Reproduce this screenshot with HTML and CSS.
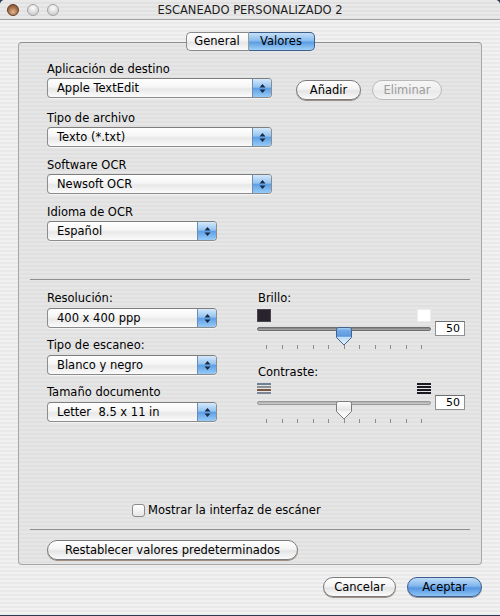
FILE: index.html
```html
<!DOCTYPE html>
<html lang="es">
<head>
<meta charset="utf-8">
<title>Escaneado personalizado 2</title>
<link rel="stylesheet" href="styles.css">
</head>
<body>
<div class="window">
  <header class="titlebar">
    <div class="lights">
      <span class="light light-close"></span>
      <span class="light"></span>
      <span class="light"></span>
    </div>
    <h1 class="title">ESCANEADO PERSONALIZADO 2</h1>
    <div></div>
  </header>

  <main class="content">
    <nav class="tabs">
      <span class="tab">General</span>
      <span class="tab tab-active">Valores</span>
    </nav>

    <section class="panel">
      <div class="group-top">
        <div class="field">
          <div class="label">Aplicación de destino</div>
          <div class="control-row">
            <div class="popup popup-long">
              <span class="popup-text">Apple TextEdit</span>
              <span class="popup-arrows"><svg width="7" height="11" viewBox="0 0 7 11"><path d="M3.5 1 L6.5 4.5 L0.5 4.5 Z M0.5 6.5 L6.5 6.5 L3.5 10 Z"/></svg></span>
            </div>
            <button class="btn btn-add">Añadir</button>
            <button class="btn btn-remove btn-disabled">Eliminar</button>
          </div>
        </div>

        <div class="field">
          <div class="label">Tipo de archivo</div>
          <div class="control-row">
            <div class="popup popup-long">
              <span class="popup-text">Texto (*.txt)</span>
              <span class="popup-arrows"><svg width="7" height="11" viewBox="0 0 7 11"><path d="M3.5 1 L6.5 4.5 L0.5 4.5 Z M0.5 6.5 L6.5 6.5 L3.5 10 Z"/></svg></span>
            </div>
          </div>
        </div>

        <div class="field">
          <div class="label">Software OCR</div>
          <div class="control-row">
            <div class="popup popup-long">
              <span class="popup-text">Newsoft OCR</span>
              <span class="popup-arrows"><svg width="7" height="11" viewBox="0 0 7 11"><path d="M3.5 1 L6.5 4.5 L0.5 4.5 Z M0.5 6.5 L6.5 6.5 L3.5 10 Z"/></svg></span>
            </div>
          </div>
        </div>

        <div class="field">
          <div class="label">Idioma de OCR</div>
          <div class="control-row">
            <div class="popup popup-short">
              <span class="popup-text">Español</span>
              <span class="popup-arrows"><svg width="7" height="11" viewBox="0 0 7 11"><path d="M3.5 1 L6.5 4.5 L0.5 4.5 Z M0.5 6.5 L6.5 6.5 L3.5 10 Z"/></svg></span>
            </div>
          </div>
        </div>
      </div>

      <div class="sep sep-top"></div>

      <div class="group-bottom">
        <div class="col-left">
          <div class="field field-low">
            <div class="label">Resolución:</div>
            <div class="control-row">
              <div class="popup popup-short">
                <span class="popup-text">400 x 400 ppp</span>
                <span class="popup-arrows"><svg width="7" height="11" viewBox="0 0 7 11"><path d="M3.5 1 L6.5 4.5 L0.5 4.5 Z M0.5 6.5 L6.5 6.5 L3.5 10 Z"/></svg></span>
              </div>
            </div>
          </div>
          <div class="field field-low">
            <div class="label">Tipo de escaneo:</div>
            <div class="control-row">
              <div class="popup popup-short">
                <span class="popup-text">Blanco y negro</span>
                <span class="popup-arrows"><svg width="7" height="11" viewBox="0 0 7 11"><path d="M3.5 1 L6.5 4.5 L0.5 4.5 Z M0.5 6.5 L6.5 6.5 L3.5 10 Z"/></svg></span>
              </div>
            </div>
          </div>
          <div class="field field-low">
            <div class="label">Tamaño documento</div>
            <div class="control-row">
              <div class="popup popup-short">
                <span class="popup-text">Letter&nbsp; 8.5 x 11 in</span>
                <span class="popup-arrows"><svg width="7" height="11" viewBox="0 0 7 11"><path d="M3.5 1 L6.5 4.5 L0.5 4.5 Z M0.5 6.5 L6.5 6.5 L3.5 10 Z"/></svg></span>
              </div>
            </div>
          </div>
        </div>

        <div class="col-right">
          <div class="slider-field">
            <div class="label">Brillo:</div>
            <div class="slider-body">
              <div class="slider-main">
                <div class="slider-icons">
                  <span class="swatch swatch-dark"></span>
                  <span class="swatch swatch-light"></span>
                </div>
                <div class="rail">
                  <div class="track track-active"></div>
                  <svg class="thumb" style="left: 50%" width="16" height="19" viewBox="0 0 16 19">
                    <defs>
                      <linearGradient id="thumbBlue" x1="0" y1="0" x2="0" y2="1">
                        <stop offset="0" stop-color="#b3d6f6"/>
                        <stop offset="0.18" stop-color="#6ea8e6"/>
                        <stop offset="0.5" stop-color="#5a98df"/>
                        <stop offset="0.56" stop-color="#bcdcf8"/>
                        <stop offset="1" stop-color="#e6f4fd"/>
                      </linearGradient>
                    </defs>
                    <path d="M2.5 0.5 H13.5 A2 2 0 0 1 15.5 2.5 V10.5 L8 18 L0.5 10.5 V2.5 A2 2 0 0 1 2.5 0.5 Z" fill="url(#thumbBlue)" stroke="#42628c"/>
                  </svg>
                </div>
                <div class="ticks">
                  <i></i><i></i><i></i><i></i><i></i><i></i><i></i><i></i><i></i><i></i><i></i>
                </div>
              </div>
              <div class="value">50</div>
            </div>
          </div>

          <div class="slider-field slider-field-next">
            <div class="label">Contraste:</div>
            <div class="slider-body">
              <div class="slider-main">
                <div class="slider-icons">
                  <svg class="bars" width="14" height="12" viewBox="0 0 14 12">
                    <rect x="0" y="0" width="14" height="2" fill="#6f8196"/>
                    <rect x="0" y="3" width="14" height="2" fill="#8d8f93"/>
                    <rect x="0" y="6" width="14" height="2" fill="#7a5845"/>
                    <rect x="0" y="9" width="14" height="2" fill="#7c8898"/>
                  </svg>
                  <svg class="bars" width="14" height="12" viewBox="0 0 14 12">
                    <rect x="0" y="0" width="14" height="2" fill="#1c1b22"/>
                    <rect x="0" y="3" width="14" height="2" fill="#1c1b22"/>
                    <rect x="0" y="6" width="14" height="2" fill="#1c1b22"/>
                    <rect x="0" y="9" width="14" height="2" fill="#1c1b22"/>
                  </svg>
                </div>
                <div class="rail">
                  <div class="track"></div>
                  <svg class="thumb" style="left: 50%" width="16" height="19" viewBox="0 0 16 19">
                    <defs>
                      <linearGradient id="thumbGray" x1="0" y1="0" x2="0" y2="1">
                        <stop offset="0" stop-color="#ffffff"/>
                        <stop offset="0.5" stop-color="#e4e4e4"/>
                        <stop offset="0.56" stop-color="#f4f4f4"/>
                        <stop offset="1" stop-color="#ffffff"/>
                      </linearGradient>
                    </defs>
                    <path d="M2.5 0.5 H13.5 A2 2 0 0 1 15.5 2.5 V10.5 L8 18 L0.5 10.5 V2.5 A2 2 0 0 1 2.5 0.5 Z" fill="url(#thumbGray)" stroke="#7a7a7a"/>
                  </svg>
                </div>
                <div class="ticks">
                  <i></i><i></i><i></i><i></i><i></i><i></i><i></i><i></i><i></i><i></i><i></i>
                </div>
              </div>
              <div class="value">50</div>
            </div>
          </div>
        </div>
      </div>

      <label class="check-row">
        <span class="checkbox"></span>
        <span>Mostrar la interfaz de escáner</span>
      </label>

      <div class="sep sep-bottom"></div>

      <div class="reset-row">
        <button class="btn btn-reset">Restablecer valores predeterminados</button>
      </div>
    </section>

    <footer class="footer">
      <button class="btn btn-cancel">Cancelar</button>
      <button class="btn btn-default">Aceptar</button>
    </footer>
  </main>
</div>
</body>
</html>
```

FILE: styles.css
```css
* {
  box-sizing: border-box;
}

html,
body {
  margin: 0;
  padding: 0;
}

body {
  width: 500px;
  height: 616px;
  overflow: hidden;
  background: #2e3a55;
  font-family: "DejaVu Sans", "Liberation Sans", sans-serif;
  font-size: 11.5px;
  color: #000;
}

/* ---------- window frame ---------- */

.window {
  width: 500px;
  height: 615px;
  display: flex;
  flex-direction: column;
  border-radius: 5px 5px 0 0;
  overflow: hidden;
  background: repeating-linear-gradient(to bottom, #f1f1f1 0 2px, #e9e9e9 2px 4px);
}

.titlebar {
  flex: none;
  height: 20px;
  display: grid;
  grid-template-columns: 1fr auto 1fr;
  align-items: center;
  padding: 0 7px;
  background: repeating-linear-gradient(to bottom, #e9e9e9 0 2px, #e1e1e1 2px 4px);
  border-bottom: 1px solid #a3a3a3;
}

.lights {
  display: flex;
  gap: 8px;
}

.light {
  width: 12px;
  height: 12px;
  border-radius: 50%;
  border: 1px solid #a2a2a2;
  background: radial-gradient(circle at 50% 30%, #fdfdfd 0, #dcdcdc 55%, #c3c3c3 100%);
}

.light-close {
  border-color: #5e3b22;
  background: radial-gradient(circle at 50% 70%, #e2b88f 0, #a66f49 55%, #6f4427 100%);
}

.title {
  margin: 0;
  font-size: 11.5px;
  font-weight: normal;
  color: #1c1c1c;
  letter-spacing: 0;
}

/* ---------- content ---------- */

.content {
  flex: 1;
  display: flex;
  flex-direction: column;
  padding: 12px 18px 0;
}

.tabs {
  position: relative;
  z-index: 1;
  align-self: center;
  display: flex;
  height: 19px;
}

.tab {
  display: flex;
  align-items: center;
  justify-content: center;
  height: 19px;
  border: 1px solid #8a8a8a;
  background: linear-gradient(to bottom, #ffffff 0, #f4f4f4 45%, #e6e6e6 55%, #fafafa 100%);
  line-height: 1;
}

.tab:first-child {
  width: 63px;
  border-radius: 5px 0 0 5px;
  border-right-color: #9a9a9a;
}

.tab-active {
  width: 66px;
  border-radius: 0 5px 5px 0;
  border-color: #3f5f8c;
  border-left: none;
  background: linear-gradient(to bottom, #c5e0f8 0, #88bcee 45%, #5c9de3 55%, #9fd0f7 100%);
}

.panel {
  flex: none;
  height: 523px;
  margin-top: -9px;
  display: flex;
  flex-direction: column;
  padding: 19px 11px 0;
  border: 1px solid #a6a6a6;
  border-top-color: #8e8e8e;
  border-radius: 4px;
  background: repeating-linear-gradient(to bottom, #e6e6e6 0 2px, #e0e0e0 2px 4px);
}

.group-top {
  padding-left: 17px;
}

.field + .field {
  margin-top: 11px;
}

.label {
  height: 14px;
  line-height: 14px;
  white-space: nowrap;
}

.control-row {
  display: flex;
  align-items: flex-start;
  margin-top: 2px;
}

/* ---------- popup menus ---------- */

.popup {
  display: flex;
  height: 20px;
  border: 1px solid #8c8c8c;
  border-top-color: #7e7e7e;
  border-radius: 4px;
  background: linear-gradient(to bottom, #ffffff 0, #f5f5f5 45%, #e8e8e8 55%, #fbfbfb 100%);
  box-shadow: 0 1px 0 rgba(255, 255, 255, 0.6);
  overflow: hidden;
}

.popup-long {
  width: 225px;
}

.popup-short {
  width: 170px;
}

.popup-text {
  flex: 1;
  padding-left: 9px;
  line-height: 18px;
  white-space: nowrap;
}

.popup-arrows {
  width: 19px;
  display: flex;
  align-items: center;
  justify-content: center;
  border-left: 1px solid #6c8cb6;
  background: linear-gradient(to bottom, #d5e9fc 0, #93c3f0 45%, #5d9fe6 52%, #96cbf7 100%);
}

.popup-arrows svg {
  fill: #1a2a45;
}

/* ---------- push buttons ---------- */

.btn {
  height: 20px;
  padding: 0;
  border: 1px solid #7b7b7b;
  border-radius: 10px;
  background: linear-gradient(to bottom, #ffffff 0, #f4f4f4 45%, #e4e4e4 55%, #fbfbfb 100%);
  box-shadow: 0 1px 0 rgba(100, 70, 45, 0.55);
  font: inherit;
  color: #000;
  line-height: 18px;
  text-align: center;
}

.btn-add {
  width: 65px;
  margin: 2px 0 0 24px;
}

.btn-remove {
  width: 70px;
  margin: 2px 0 0 11px;
}

.btn-disabled {
  border-color: #b9b9b9;
  color: #9c9c9c;
  box-shadow: none;
  background: linear-gradient(to bottom, #f6f6f6 0, #efefef 50%, #e8e8e8 55%, #f4f4f4 100%);
}

.btn-reset {
  width: 251px;
}

.btn-cancel {
  width: 73px;
}

.btn-default {
  width: 75px;
  border-color: #3c5d8c;
  background: linear-gradient(to bottom, #c0dcf7 0, #80b6ec 45%, #5596e1 55%, #8ec4f4 100%);
  box-shadow: 0 1px 0 rgba(40, 50, 80, 0.5);
}

/* ---------- separators ---------- */

.sep {
  height: 1px;
  background: #8f8f8f;
}

.sep-top {
  margin-top: 38px;
}

.sep-bottom {
  margin-top: 12px;
}

/* ---------- lower settings ---------- */

.group-bottom {
  display: grid;
  grid-template-columns: 210px 1fr;
  margin-top: 11px;
  padding-left: 17px;
}

.field-low .control-row {
  margin-top: 3px;
}

.field-low + .field-low {
  margin-top: 10px;
}

.col-right .label {
  padding-left: 1px;
}

.slider-field-next {
  margin-top: 15px;
}

.slider-body {
  display: flex;
  align-items: flex-start;
}

.slider-main {
  width: 174px;
}

.slider-icons {
  display: flex;
  justify-content: space-between;
  align-items: flex-start;
  height: 13px;
  margin-top: 4px;
}

.bars {
  display: block;
}

.swatch {
  width: 14px;
  height: 13px;
}

.swatch-dark {
  background: #28232d;
  border: 1px solid #4a4650;
}

.swatch-light {
  background: #ffffff;
  border: 1px solid #ececec;
}

.rail {
  position: relative;
  height: 18px;
  margin-top: 5px;
}

.track {
  margin-top: 4px;
  height: 4px;
  border-radius: 2px;
  border: 1px solid #9a9a9a;
  background: linear-gradient(to bottom, #a9a9a9, #cfcfcf);
}

.track-active {
  border-color: #6f6f6f;
  background: linear-gradient(to bottom, #7f7f7f, #a8a8a8);
}

.thumb {
  position: absolute;
  top: 0;
  transform: translateX(-50%);
}

.ticks {
  display: flex;
  justify-content: space-between;
  padding: 0 9px;
  height: 5px;
}

.ticks i {
  width: 1px;
  height: 4px;
  background: #8c8c8c;
}

.value {
  width: 30px;
  height: 15px;
  margin: 16px 0 0 4px;
  padding-right: 4px;
  border: 1px solid #8f8f8f;
  border-top-color: #6f6f6f;
  background: #ffffff;
  text-align: right;
  font-size: 11px;
  line-height: 13px;
}

/* ---------- checkbox & reset ---------- */

.check-row {
  display: flex;
  align-items: center;
  gap: 3px;
  height: 14px;
  margin-top: 79px;
  padding-left: 102px;
  line-height: 14px;
}

.checkbox {
  width: 13px;
  height: 13px;
  border: 1px solid #8a8a8a;
  border-radius: 3px;
  background: linear-gradient(to bottom, #ffffff, #e6e6e6);
}

.reset-row {
  margin-top: 10px;
  padding-left: 17px;
}

/* ---------- footer ---------- */

.footer {
  display: flex;
  justify-content: flex-end;
  gap: 11px;
  margin-top: 12px;
}
```
